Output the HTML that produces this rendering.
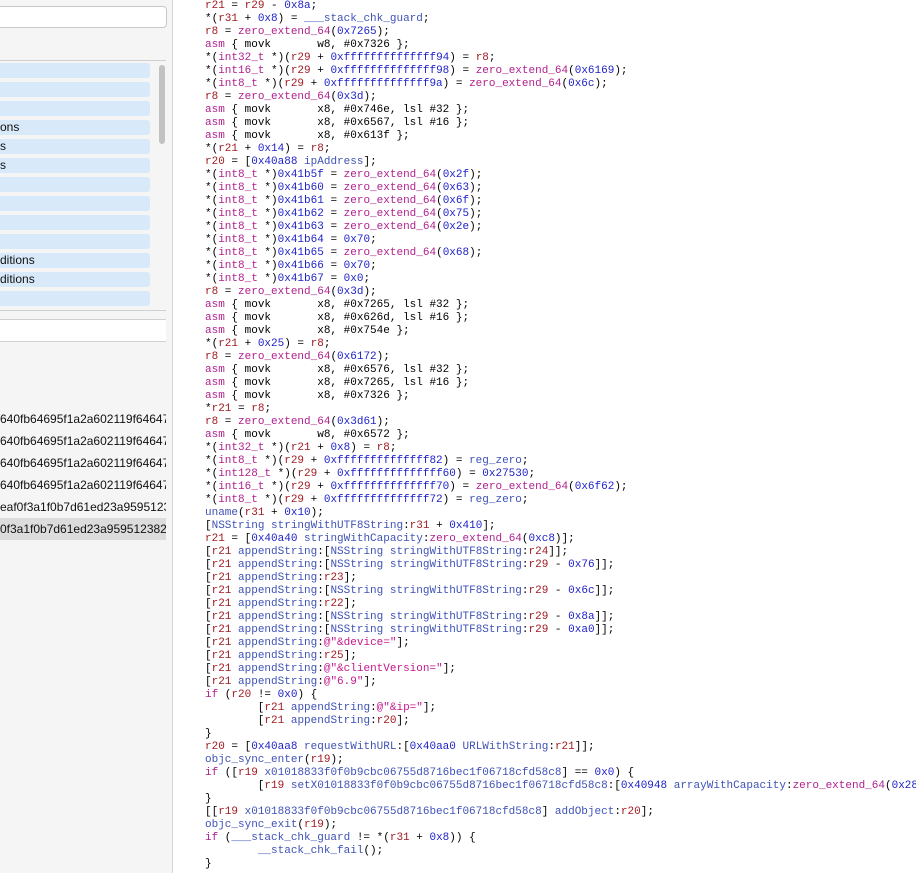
<!DOCTYPE html>
<html><head><meta charset="utf-8"><style>
body{margin:0;width:916px;height:873px;overflow:hidden;background:#fff;position:relative;font-family:"Liberation Sans",sans-serif}
#left{position:absolute;left:0;top:0;width:172px;height:873px;background:#f5f5f5;border-right:1px solid #d6d6d6;overflow:hidden}
.search{position:absolute;left:-6px;top:6px;width:171px;height:20px;background:#fff;border:1px solid #c8c8c8;border-radius:4px}
.list{position:absolute;left:0;top:60px;width:166px;height:249px;border-top:1px solid #d0d0d0;border-bottom:1px solid #d0d0d0;background:#f5f5f5}
.row{position:absolute;left:0;width:150px;height:15px;background:#d8e9fa;border-radius:0 3px 3px 0;font-size:12px;line-height:15px;color:#111;white-space:nowrap;overflow:hidden}
.sb{position:absolute;left:159px;top:4px;width:6px;height:79px;background:#c2c2c2;border-radius:3px}
.field{position:absolute;left:0;top:319px;width:166px;height:21px;background:#fff;border-top:1px solid #d0d0d0;border-bottom:1px solid #d0d0d0}
.h{position:absolute;left:0;width:166px;height:22px;font-size:12px;line-height:22px;color:#111;white-space:nowrap;overflow:hidden}
pre{position:absolute;left:205px;top:0;margin:0;font-family:"Liberation Mono",monospace;font-size:11px;line-height:13px;color:#000;white-space:pre}
.r{color:#a01c22}.n{color:#1c1fc8}.k{color:#b0218e}.m{color:#3f52b6}.s{color:#c4198c}
</style></head><body>
<div id="left">
<div class="search"></div>
<div class="list">
<div class="row" style="top:2px"></div>
<div class="row" style="top:21px"></div>
<div class="row" style="top:40px"></div>
<div class="row" style="top:59px">ons</div>
<div class="row" style="top:78px">s</div>
<div class="row" style="top:97px">s</div>
<div class="row" style="top:116px"></div>
<div class="row" style="top:135px"></div>
<div class="row" style="top:154px"></div>
<div class="row" style="top:173px"></div>
<div class="row" style="top:192px">ditions</div>
<div class="row" style="top:211px">ditions</div>
<div class="row" style="top:230px"></div>
<div class="sb"></div>
</div>
<div class="field"></div>
<div class="h" style="top:408px">640fb64695f1a2a602119f64647</div>
<div class="h" style="top:430px">640fb64695f1a2a602119f64647</div>
<div class="h" style="top:452px">640fb64695f1a2a602119f64647</div>
<div class="h" style="top:474px">640fb64695f1a2a602119f64647</div>
<div class="h" style="top:496px">eaf0f3a1f0b7d61ed23a9595123</div>
<div class="h" style="top:518px;background:#dcdcdc">0f3a1f0b7d61ed23a95951238211</div>
</div>
<pre><span class="r">r21</span> = <span class="r">r29</span> - <span class="n">0x8a</span>;
*(<span class="r">r31</span> + <span class="n">0x8</span>) = <span class="m">___stack_chk_guard</span>;
<span class="r">r8</span> = <span class="k">zero_extend_64</span>(<span class="n">0x7265</span>);
<span class="k">asm</span> { movk       w8, #0x7326 };
*(<span class="k">int32_t</span> *)(<span class="r">r29</span> + <span class="n">0xffffffffffffff94</span>) = <span class="r">r8</span>;
*(<span class="k">int16_t</span> *)(<span class="r">r29</span> + <span class="n">0xffffffffffffff98</span>) = <span class="k">zero_extend_64</span>(<span class="n">0x6169</span>);
*(<span class="k">int8_t</span> *)(<span class="r">r29</span> + <span class="n">0xffffffffffffff9a</span>) = <span class="k">zero_extend_64</span>(<span class="n">0x6c</span>);
<span class="r">r8</span> = <span class="k">zero_extend_64</span>(<span class="n">0x3d</span>);
<span class="k">asm</span> { movk       x8, #0x746e, lsl #32 };
<span class="k">asm</span> { movk       x8, #0x6567, lsl #16 };
<span class="k">asm</span> { movk       x8, #0x613f };
*(<span class="r">r21</span> + <span class="n">0x14</span>) = <span class="r">r8</span>;
<span class="r">r20</span> = [<span class="n">0x40a88</span> <span class="m">ipAddress</span>];
*(<span class="k">int8_t</span> *)<span class="n">0x41b5f</span> = <span class="k">zero_extend_64</span>(<span class="n">0x2f</span>);
*(<span class="k">int8_t</span> *)<span class="n">0x41b60</span> = <span class="k">zero_extend_64</span>(<span class="n">0x63</span>);
*(<span class="k">int8_t</span> *)<span class="n">0x41b61</span> = <span class="k">zero_extend_64</span>(<span class="n">0x6f</span>);
*(<span class="k">int8_t</span> *)<span class="n">0x41b62</span> = <span class="k">zero_extend_64</span>(<span class="n">0x75</span>);
*(<span class="k">int8_t</span> *)<span class="n">0x41b63</span> = <span class="k">zero_extend_64</span>(<span class="n">0x2e</span>);
*(<span class="k">int8_t</span> *)<span class="n">0x41b64</span> = <span class="n">0x70</span>;
*(<span class="k">int8_t</span> *)<span class="n">0x41b65</span> = <span class="k">zero_extend_64</span>(<span class="n">0x68</span>);
*(<span class="k">int8_t</span> *)<span class="n">0x41b66</span> = <span class="n">0x70</span>;
*(<span class="k">int8_t</span> *)<span class="n">0x41b67</span> = <span class="n">0x0</span>;
<span class="r">r8</span> = <span class="k">zero_extend_64</span>(<span class="n">0x3d</span>);
<span class="k">asm</span> { movk       x8, #0x7265, lsl #32 };
<span class="k">asm</span> { movk       x8, #0x626d, lsl #16 };
<span class="k">asm</span> { movk       x8, #0x754e };
*(<span class="r">r21</span> + <span class="n">0x25</span>) = <span class="r">r8</span>;
<span class="r">r8</span> = <span class="k">zero_extend_64</span>(<span class="n">0x6172</span>);
<span class="k">asm</span> { movk       x8, #0x6576, lsl #32 };
<span class="k">asm</span> { movk       x8, #0x7265, lsl #16 };
<span class="k">asm</span> { movk       x8, #0x7326 };
*<span class="r">r21</span> = <span class="r">r8</span>;
<span class="r">r8</span> = <span class="k">zero_extend_64</span>(<span class="n">0x3d61</span>);
<span class="k">asm</span> { movk       w8, #0x6572 };
*(<span class="k">int32_t</span> *)(<span class="r">r21</span> + <span class="n">0x8</span>) = <span class="r">r8</span>;
*(<span class="k">int8_t</span> *)(<span class="r">r29</span> + <span class="n">0xffffffffffffff82</span>) = <span class="m">reg_zero</span>;
*(<span class="k">int128_t</span> *)(<span class="r">r29</span> + <span class="n">0xffffffffffffff60</span>) = <span class="n">0x27530</span>;
*(<span class="k">int16_t</span> *)(<span class="r">r29</span> + <span class="n">0xffffffffffffff70</span>) = <span class="k">zero_extend_64</span>(<span class="n">0x6f62</span>);
*(<span class="k">int8_t</span> *)(<span class="r">r29</span> + <span class="n">0xffffffffffffff72</span>) = <span class="m">reg_zero</span>;
<span class="m">uname</span>(<span class="r">r31</span> + <span class="n">0x10</span>);
[<span class="m">NSString</span> <span class="m">stringWithUTF8String</span>:<span class="r">r31</span> + <span class="n">0x410</span>];
<span class="r">r21</span> = [<span class="n">0x40a40</span> <span class="m">stringWithCapacity</span>:<span class="k">zero_extend_64</span>(<span class="n">0xc8</span>)];
[<span class="r">r21</span> <span class="m">appendString</span>:[<span class="m">NSString</span> <span class="m">stringWithUTF8String</span>:<span class="r">r24</span>]];
[<span class="r">r21</span> <span class="m">appendString</span>:[<span class="m">NSString</span> <span class="m">stringWithUTF8String</span>:<span class="r">r29</span> - <span class="n">0x76</span>]];
[<span class="r">r21</span> <span class="m">appendString</span>:<span class="r">r23</span>];
[<span class="r">r21</span> <span class="m">appendString</span>:[<span class="m">NSString</span> <span class="m">stringWithUTF8String</span>:<span class="r">r29</span> - <span class="n">0x6c</span>]];
[<span class="r">r21</span> <span class="m">appendString</span>:<span class="r">r22</span>];
[<span class="r">r21</span> <span class="m">appendString</span>:[<span class="m">NSString</span> <span class="m">stringWithUTF8String</span>:<span class="r">r29</span> - <span class="n">0x8a</span>]];
[<span class="r">r21</span> <span class="m">appendString</span>:[<span class="m">NSString</span> <span class="m">stringWithUTF8String</span>:<span class="r">r29</span> - <span class="n">0xa0</span>]];
[<span class="r">r21</span> <span class="m">appendString</span>:<span class="s">@"&amp;device="</span>];
[<span class="r">r21</span> <span class="m">appendString</span>:<span class="r">r25</span>];
[<span class="r">r21</span> <span class="m">appendString</span>:<span class="s">@"&amp;clientVersion="</span>];
[<span class="r">r21</span> <span class="m">appendString</span>:<span class="s">@"6.9"</span>];
<span class="k">if</span> (<span class="r">r20</span> != <span class="n">0x0</span>) {
        [<span class="r">r21</span> <span class="m">appendString</span>:<span class="s">@"&amp;ip="</span>];
        [<span class="r">r21</span> <span class="m">appendString</span>:<span class="r">r20</span>];
}
<span class="r">r20</span> = [<span class="n">0x40aa8</span> <span class="m">requestWithURL</span>:[<span class="n">0x40aa0</span> <span class="m">URLWithString</span>:<span class="r">r21</span>]];
<span class="m">objc_sync_enter</span>(<span class="r">r19</span>);
<span class="k">if</span> ([<span class="r">r19</span> <span class="m">x01018833f0f0b9cbc06755d8716bec1f06718cfd58c8</span>] == <span class="n">0x0</span>) {
        [<span class="r">r19</span> <span class="m">setX01018833f0f0b9cbc06755d8716bec1f06718cfd58c8</span>:[<span class="n">0x40948</span> <span class="m">arrayWithCapacity</span>:<span class="k">zero_extend_64</span>(<span class="n">0x28</span>)]];
}
[[<span class="r">r19</span> <span class="m">x01018833f0f0b9cbc06755d8716bec1f06718cfd58c8</span>] <span class="m">addObject</span>:<span class="r">r20</span>];
<span class="m">objc_sync_exit</span>(<span class="r">r19</span>);
<span class="k">if</span> (<span class="m">___stack_chk_guard</span> != *(<span class="r">r31</span> + <span class="n">0x8</span>)) {
        <span class="m">__stack_chk_fail</span>();
}</pre>
</body></html>
